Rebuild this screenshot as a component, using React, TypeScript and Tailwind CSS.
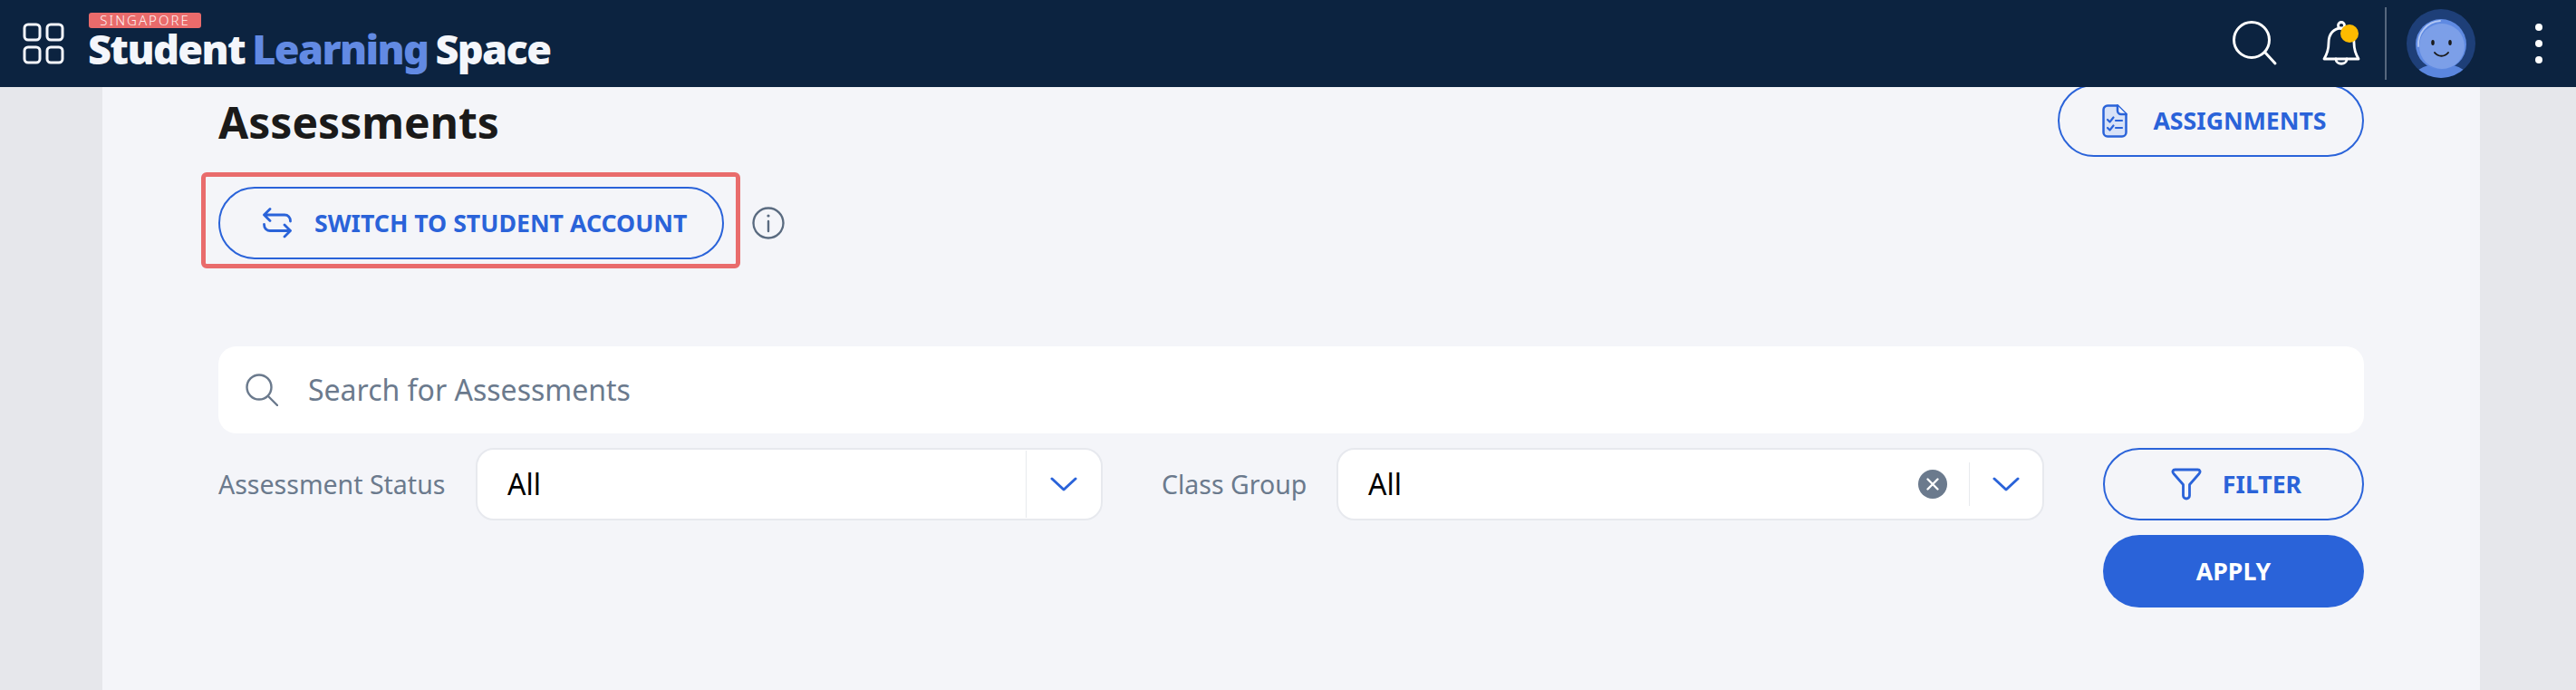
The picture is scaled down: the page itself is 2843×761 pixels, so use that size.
import React from "react";

const font = { fontFamily: '"Noto Sans", sans-serif' };

function Chevron() {
  return (
    <svg width="30" height="18" viewBox="0 0 30 18" fill="none" stroke="#2a63d9" strokeWidth="3" strokeLinecap="round" strokeLinejoin="round">
      <path d="M2 3 L15 15 L28 3" />
    </svg>
  );
}

function Select({ width, clear }: { width: string; clear?: boolean }) {
  return (
    <div className={`${width} h-20 rounded-[20px] bg-white border-2 border-[#e7e9ee] flex items-center pl-[33px] text-[32px] text-black`}>
      <span className="flex-1">All</span>
      {clear && (
        <svg width="32" height="32" viewBox="0 0 32 32" className="mr-[24px]">
          <circle cx="16" cy="16" r="16" fill="#6b7a8d" />
          <path d="M10.5 10.5 L21.5 21.5 M21.5 10.5 L10.5 21.5" stroke="#fff" strokeWidth="2.4" strokeLinecap="round" />
        </svg>
      )}
      <div className={`w-[1px] bg-[#e8eaee] ${clear ? "h-12" : "h-[74px]"}`} />
      <div className={`${clear ? "w-[80px]" : "w-[82px]"} flex justify-center`}>
        <Chevron />
      </div>
    </div>
  );
}

export default function App() {
  return (
    <div className="h-[761px] w-[2843px] overflow-hidden flex flex-col bg-[#e6e7eb]" style={font}>
      <header className="relative z-10 h-24 shrink-0 bg-[#0c2340] flex items-center text-white">
        <svg width="46" height="46" viewBox="0 0 46 46" fill="none" stroke="#f4f6fb" strokeWidth="3" className="ml-[25px] mr-[27px]">
          <rect x="2" y="2" width="17" height="17" rx="4" />
          <rect x="27" y="2" width="17" height="17" rx="4" />
          <rect x="2" y="27" width="17" height="17" rx="4" />
          <rect x="27" y="27" width="17" height="17" rx="4" />
        </svg>
        <div className="flex flex-col self-start pt-[14px]">
          <div className="w-[124px] h-[17px] rounded-[3px] bg-[#ea6b6b] flex items-center justify-center text-[15px] leading-none font-light tracking-[2px] text-[#fdf2f2]">
            SINGAPORE
          </div>
          <div className="flex gap-[8px] text-[45px] leading-[42px] font-black tracking-[-1.6px] mt-[2px] -ml-[1px] text-[#f4f6fb]">
            <span>Student</span>
            <span className="text-[#628ae3]">Learning</span>
            <span>Space</span>
          </div>
        </div>
        <div className="flex-1" />
        <svg width="50" height="50" viewBox="0 0 50 50" fill="none" stroke="#fff" strokeWidth="3" strokeLinecap="round" className="mr-[48px]">
          <circle cx="21" cy="21" r="19.5" />
          <path d="M36 35 L47 47" />
        </svg>
        <div className="relative w-[44px] h-[50px] mr-[26px]">
          <svg width="44" height="50" viewBox="0 0 44 50" fill="none" stroke="#fff" strokeWidth="2.8" strokeLinecap="round" strokeLinejoin="round">
            <circle cx="22" cy="5" r="3.5" />
            <path d="M8 24 C8 14 14 8 22 8 C30 8 36 14 36 24 C36 32 38 37 41 42 H3 C6 37 8 32 8 24 Z" />
            <path d="M16 42 C16 49 28 49 28 42" />
          </svg>
          <span className="absolute left-[21px] top-[4px] w-5 h-5 rounded-full bg-[#fdbb00]" />
        </div>
        <div className="w-[2px] h-20 bg-[#56677d] mr-[22px]" />
        <svg width="76" height="76" viewBox="0 0 76 76" className="mr-[66px]">
          <defs>
            <clipPath id="avatar-clip"><circle cx="38" cy="38" r="38" /></clipPath>
          </defs>
          <circle cx="38" cy="38" r="38" fill="#1e3f78" />
          <g clipPath="url(#avatar-clip)">
            <ellipse cx="38" cy="82" rx="34" ry="22" fill="#5a86de" />
          </g>
          <circle cx="38" cy="39" r="28" fill="#5f8ae2" />
          <circle cx="39" cy="41" r="25" fill="#7c9fe8" />
          <path d="M13 41 C12 27 22 14 37 13" fill="none" stroke="#b3c8f4" strokeWidth="1.8" strokeLinecap="round" />
          <ellipse cx="29" cy="37" rx="1.8" ry="3" fill="#1a1a1a" />
          <ellipse cx="48" cy="37" rx="1.8" ry="3" fill="#1a1a1a" />
          <path d="M31 48 C35 53 42 53 46 48" fill="none" stroke="#1a1a1a" strokeWidth="2" strokeLinecap="round" />
        </svg>
        <div className="flex flex-col gap-[10px] mr-[37px]">
          <span className="w-2 h-2 rounded-full bg-white" />
          <span className="w-2 h-2 rounded-full bg-white" />
          <span className="w-2 h-2 rounded-full bg-white" />
        </div>
      </header>

      <main className="flex-1 ml-[113px] mr-[106px] bg-[#f4f5f9] pl-[128px] pr-[128px]">
        <div className="flex justify-between items-start -mt-[3px]">
          <h1 className="text-[48px] leading-[66px] font-bold text-[#1a1a1a] mt-[9px]">Assessments</h1>
          <button className="w-[338px] h-20 rounded-full border-2 border-[#2a63d9] flex items-center justify-center pl-[8px] gap-[28px] text-[26.7px] font-bold text-[#2a63d9]">
            <svg width="28" height="37" viewBox="0 0 28 37" fill="none" stroke="#2a63d9" strokeWidth="2.5" strokeLinecap="round" strokeLinejoin="round">
              <path d="M17 1.5 H6 A4.5 4.5 0 0 0 1.5 6 V31 A4.5 4.5 0 0 0 6 35.5 H22 A4.5 4.5 0 0 0 26.5 31 V11 Z" fill="#d8e2f7" />
              <path d="M17 1.5 V7 A4 4 0 0 0 21 11 H26.5" fill="#f4f5f9" />
              <path d="M6 17 L8.5 19.5 L12.5 14.5 M6 26 L8.5 28.5 L12.5 23.5 M15 18 H22 M15 26 H22" strokeWidth="2.2" />
            </svg>
            ASSIGNMENTS
          </button>
        </div>
        <div className="flex items-center mt-[17px] -ml-[19px]">
          <div className="w-[595px] h-[106px] rounded-[6px] border-[5px] border-[#e96c6c] flex items-center pl-[14px] pt-[6px]">
            <button className="w-[558px] h-20 rounded-full border-2 border-[#2a63d9] flex items-center pl-[47px] gap-[25px] text-[26.7px] font-bold text-[#2a63d9] whitespace-nowrap">
              <svg width="32" height="34" viewBox="0 0 32 34" fill="none" stroke="#2a63d9" strokeWidth="2.8" strokeLinecap="round" strokeLinejoin="round">
                <path d="M8 1.5 L1.5 8 L8 14.5 M1.5 8 H24 C28 8 30.5 11 30.5 15" />
                <path d="M24 19 L30.5 25.5 L24 32 M30.5 25.5 H8 C4 25.5 1.5 22.5 1.5 18.5" />
              </svg>
              SWITCH TO STUDENT ACCOUNT
            </button>
          </div>
          <svg width="36" height="36" viewBox="0 0 36 36" fill="none" stroke="#5a6b80" strokeWidth="2.4" strokeLinecap="round" className="ml-[13px] mt-[6px]">
            <circle cx="18" cy="18" r="16.5" />
            <path d="M18 16 V27" />
            <circle cx="18" cy="10" r="1.6" fill="#5a6b80" stroke="none" />
          </svg>
        </div>

        <div className="mt-[86px] h-24 rounded-[20px] bg-white flex items-center pl-[30px] gap-[33px]">
          <svg width="36" height="36" viewBox="0 0 36 36" fill="none" stroke="#6b7a8d" strokeWidth="2.4" strokeLinecap="round">
            <circle cx="15" cy="15" r="13.5" />
            <path d="M25 25 L35 35" />
          </svg>
          <span className="text-[32px] text-[#6b7a8d]">Search for Assessments</span>
        </div>

        <div className="flex mt-[16px] items-start">
          <span className="w-[284px] h-20 flex items-center text-[28.5px] text-[#6b7a8d] whitespace-nowrap">Assessment Status</span>
          <Select width="w-[692px]" />
          <span className="ml-[65px] w-[193px] h-20 flex items-center text-[28.5px] text-[#6b7a8d] whitespace-nowrap">Class Group</span>
          <Select width="w-[781px]" clear />
          <div className="ml-[65px] w-[288px] flex flex-col gap-[16px]">
            <button className="h-20 rounded-full border-2 border-[#2a63d9] flex items-center justify-center pl-[6px] gap-[23px] text-[26.7px] font-bold text-[#2a63d9]">
              <svg width="34" height="36" viewBox="0 0 34 36" fill="none" stroke="#2a63d9" strokeWidth="2.8" strokeLinejoin="round" strokeLinecap="round">
                <path d="M4.5 2 H29.5 C32 2 33 4.5 31 6.5 L20.5 18.5 V30.5 A3.5 3.5 0 0 1 13.5 30.5 V18.5 L3 6.5 C1 4.5 2 2 4.5 2 Z" />
              </svg>
              FILTER
            </button>
            <button className="h-20 rounded-full bg-[#2a63d9] flex items-center justify-center text-[26.7px] font-bold text-white">
              APPLY
            </button>
          </div>
        </div>
      </main>
    </div>
  );
}
